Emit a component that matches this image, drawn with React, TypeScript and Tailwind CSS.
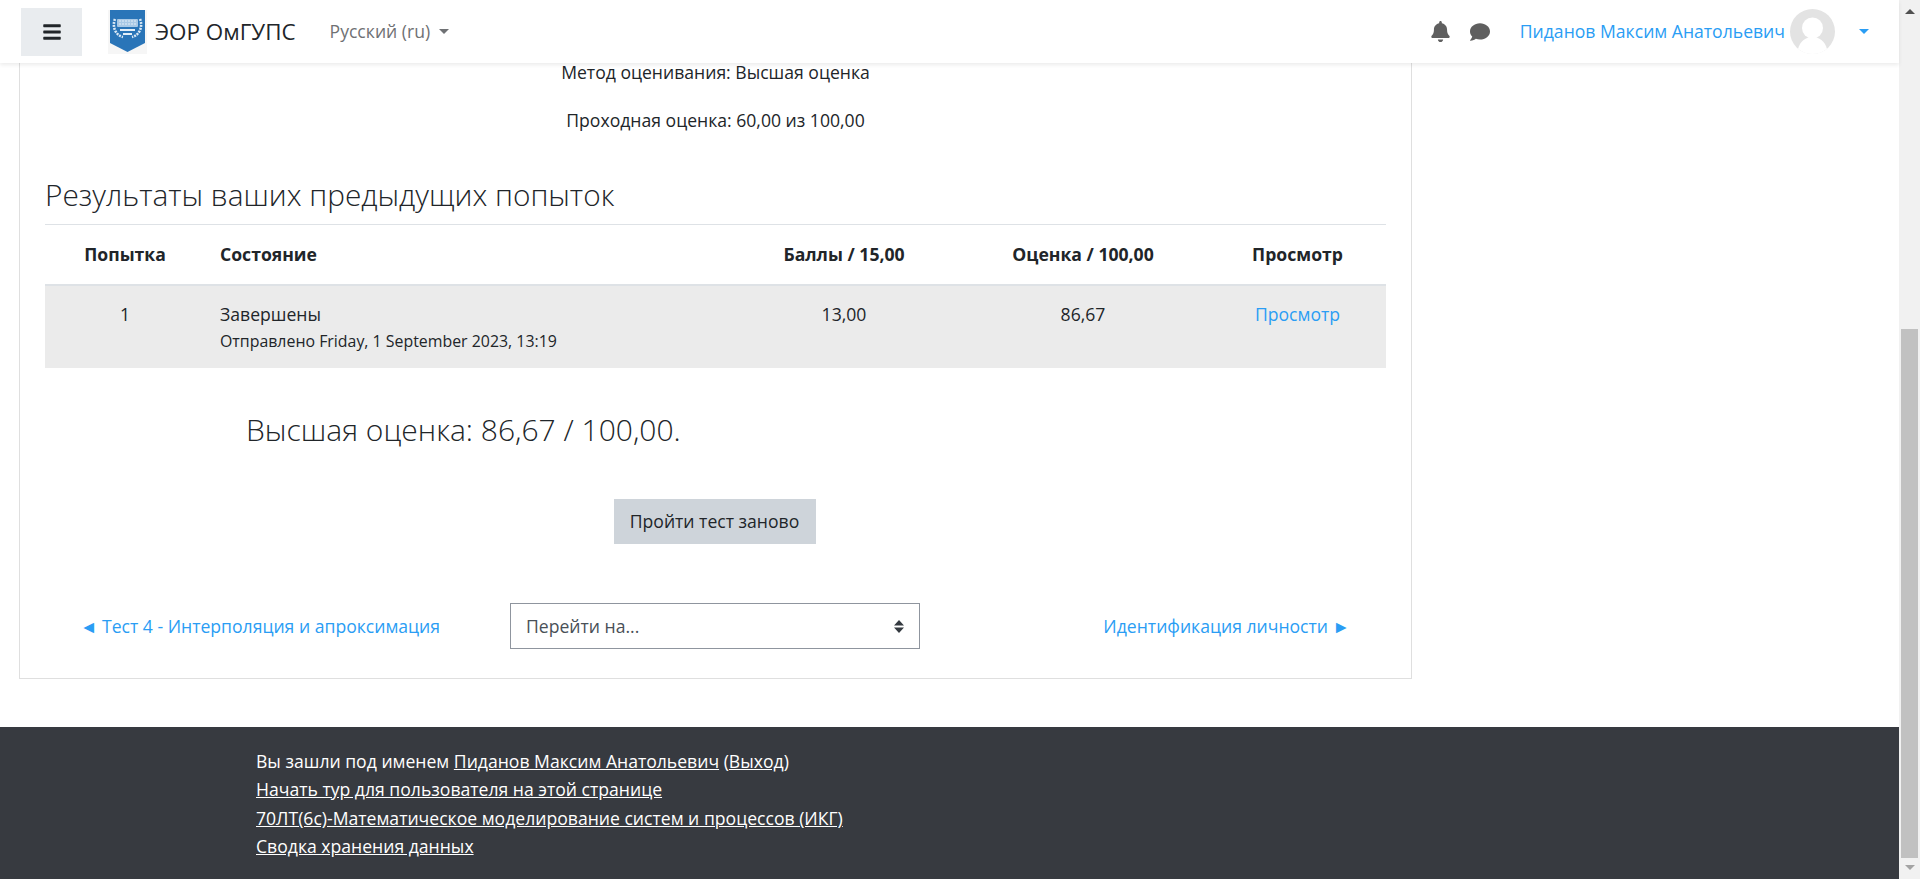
import { FaBars, FaBell, FaComment } from "react-icons/fa";

const font = "font-['Open_Sans','Noto_Sans',sans-serif]";

const Caret = ({ className = "" }: { className?: string }) => (
  <span className={`inline-block w-0 h-0 border-x-[5px] border-x-transparent border-t-[5px] ${className}`} />
);

const Logo = () => (
  <svg width="39" height="44" viewBox="0 0 39 44" className="shrink-0">
    <rect width="39" height="44" fill="#f6f6f6" />
    <path d="M2 0H37V33L19.5 42L2 33Z" fill="#2a75b8" />
    <path d="M7 9C4 16 7 25 15 27" fill="none" stroke="#dbe9f5" strokeWidth="2.6" strokeDasharray="2 1" />
    <path d="M32 9C35 16 32 25 24 27" fill="none" stroke="#dbe9f5" strokeWidth="2.6" strokeDasharray="2 1" />
    <rect x="9" y="9" width="21" height="8" rx="1" fill="#a9c9e6" />
    <path d="M11 11H28M11 14H28" stroke="#e4eff8" strokeWidth="1" strokeDasharray="2 1" />
    <rect x="12" y="19" width="15" height="2" fill="#e4eff8" />
    <rect x="15" y="23" width="9" height="2" fill="#e4eff8" />
  </svg>
);

const Avatar = () => (
  <svg width="45" height="45" viewBox="0 0 45 45" className="shrink-0">
    <circle cx="22.5" cy="22.5" r="22.5" fill="#e3e3e3" />
    <circle cx="22.5" cy="19" r="10.5" fill="#fff" />
    <path d="M8 40C10 32 16 28 22.5 28C29 28 35 32 37 40C33 43 28 45 22.5 45C17 45 12 43 8 40Z" fill="#fff" />
  </svg>
);

const Navbar = () => (
  <header className="h-[63px] bg-white shadow-[0_2px_4px_rgba(0,0,0,0.08)] flex items-center relative z-10 shrink-0">
    <button className="ml-[21px] w-[61px] h-[48px] bg-[#e9ecef] flex items-center justify-center text-[#212529]">
      <FaBars size={20} />
    </button>
    <div className="ml-[26px] flex items-center">
      <Logo />
      <span className="ml-[8px] text-[22.4px] text-[#212529]">ЭОР ОмГУПС</span>
    </div>
    <div className="ml-[34px] flex items-center text-[#6f7174] text-[17.6px]">
      Русский (ru)
      <Caret className="ml-[9px] border-t-[#6f7174]" />
    </div>
    <div className="ml-auto flex items-center">
      <FaBell size={21} className="text-[#5f5f5f]" />
      <FaComment size={20} className="ml-[19px] text-[#5f5f5f]" />
      <span className="ml-[30px] mr-[5px] text-[#2a9df4] text-[17.6px]">Пиданов Максим Анатольевич</span>
      <Avatar />
      <Caret className="ml-[24px] mr-[30px] border-t-[#2a9df4]" />
    </div>
  </header>
);

const ResultsTable = () => (
  <table className="w-full table-fixed border-collapse text-[17.6px] text-[#212529]">
    <thead>
      <tr className="h-[60px] border-b-2 border-[#dee2e6] font-bold">
        <th className="w-[160px] text-center">Попытка</th>
        <th className="w-[526px] text-left pl-[15px]">Состояние</th>
        <th className="w-[226px] text-center">Баллы / 15,00</th>
        <th className="w-[252px] text-center">Оценка / 100,00</th>
        <th className="text-center">Просмотр</th>
      </tr>
    </thead>
    <tbody>
      <tr className="h-[83px] bg-[#ebebeb] align-top">
        <td className="text-center pt-[15px]">1</td>
        <td className="pl-[15px] pt-[15px] leading-[26px]">
          Завершены
          <div className="text-[15.9px] leading-[28px]">Отправлено Friday, 1 September 2023, 13:19</div>
        </td>
        <td className="text-center pt-[15px]">13,00</td>
        <td className="text-center pt-[15px]">86,67</td>
        <td className="text-center pt-[15px] text-[#2a9df4]">Просмотр</td>
      </tr>
    </tbody>
  </table>
);

const Card = () => (
  <div className="ml-[19px] w-[1393px] border border-[#dfdfdf] border-t-0 px-[25px] h-[618px] text-[#212529] text-[17.6px]">
    <p className="text-center mt-[-3px] leading-[24px]">Метод оценивания: Высшая оценка</p>
    <p className="text-center mt-[24px] leading-[24px]">Проходная оценка: 60,00 из 100,00</p>
    <h3 className="mt-[42px] pb-[8px] text-[29.8px] font-light leading-[42px] border-b border-[#dee2e6]">
      Результаты ваших предыдущих попыток
    </h3>
    <ResultsTable />
    <div className="mt-[35px] ml-[201px] text-[30px] font-light leading-[54px]">Высшая оценка: 86,67 / 100,00.</div>
    <div className="mt-[42px] flex justify-center pr-[2px]">
      <button className="w-[202px] h-[45px] bg-[#ced4da] text-[#212529]">Пройти тест заново</button>
    </div>
    <div className="mt-[59px] flex items-center">
      <span className="ml-[35px] w-[430px] text-[#2a9df4]">◄ Тест 4 - Интерполяция и апроксимация</span>
      <div className="w-[410px] h-[46px] border border-[#8f959e] flex items-center justify-between pl-[15px] pr-[15px] text-[#495057]">
        Перейти на...
        <svg width="10" height="13" viewBox="0 0 10 13">
          <path d="M5 0L10 5.5H0Z M0 7.5H10L5 13Z" fill="#343a40" />
        </svg>
      </div>
      <span className="ml-auto mr-[36px] text-[#2a9df4]">Идентификация личности ►</span>
    </div>
  </div>
);

const Footer = () => (
  <footer className="mt-[48px] h-[153px] bg-[#373a40] text-white text-[17.6px] pl-[256px] pt-[20px] leading-[28.6px]">
    <div>
      Вы зашли под именем <a className="underline">Пиданов Максим Анатольевич</a> (<a className="underline">Выход</a>)
    </div>
    <div><a className="underline">Начать тур для пользователя на этой странице</a></div>
    <div><a className="underline">70ЛТ(6с)-Математическое моделирование систем и процессов (ИКГ)</a></div>
    <div><a className="underline">Сводка хранения данных</a></div>
  </footer>
);

const Scrollbar = () => (
  <div className="w-[21px] h-full bg-[#f1f1f1] flex flex-col items-center shrink-0">
    <span className="mt-[9px] w-0 h-0 border-x-[5px] border-x-transparent border-b-[5px] border-b-[#505050]" />
    <div className="mt-[315px] w-[17px] h-[529px] bg-[#c1c1c1]" />
    <span className="mt-[7px] w-0 h-0 border-x-[5px] border-x-transparent border-t-[5px] border-t-[#a3a3a3]" />
  </div>
);

export default function App() {
  return (
    <div className={`h-screen w-full flex overflow-hidden bg-white ${font}`}>
      <div className="flex-1 flex flex-col min-w-0">
        <Navbar />
        <Card />
        <Footer />
      </div>
      <Scrollbar />
    </div>
  );
}
